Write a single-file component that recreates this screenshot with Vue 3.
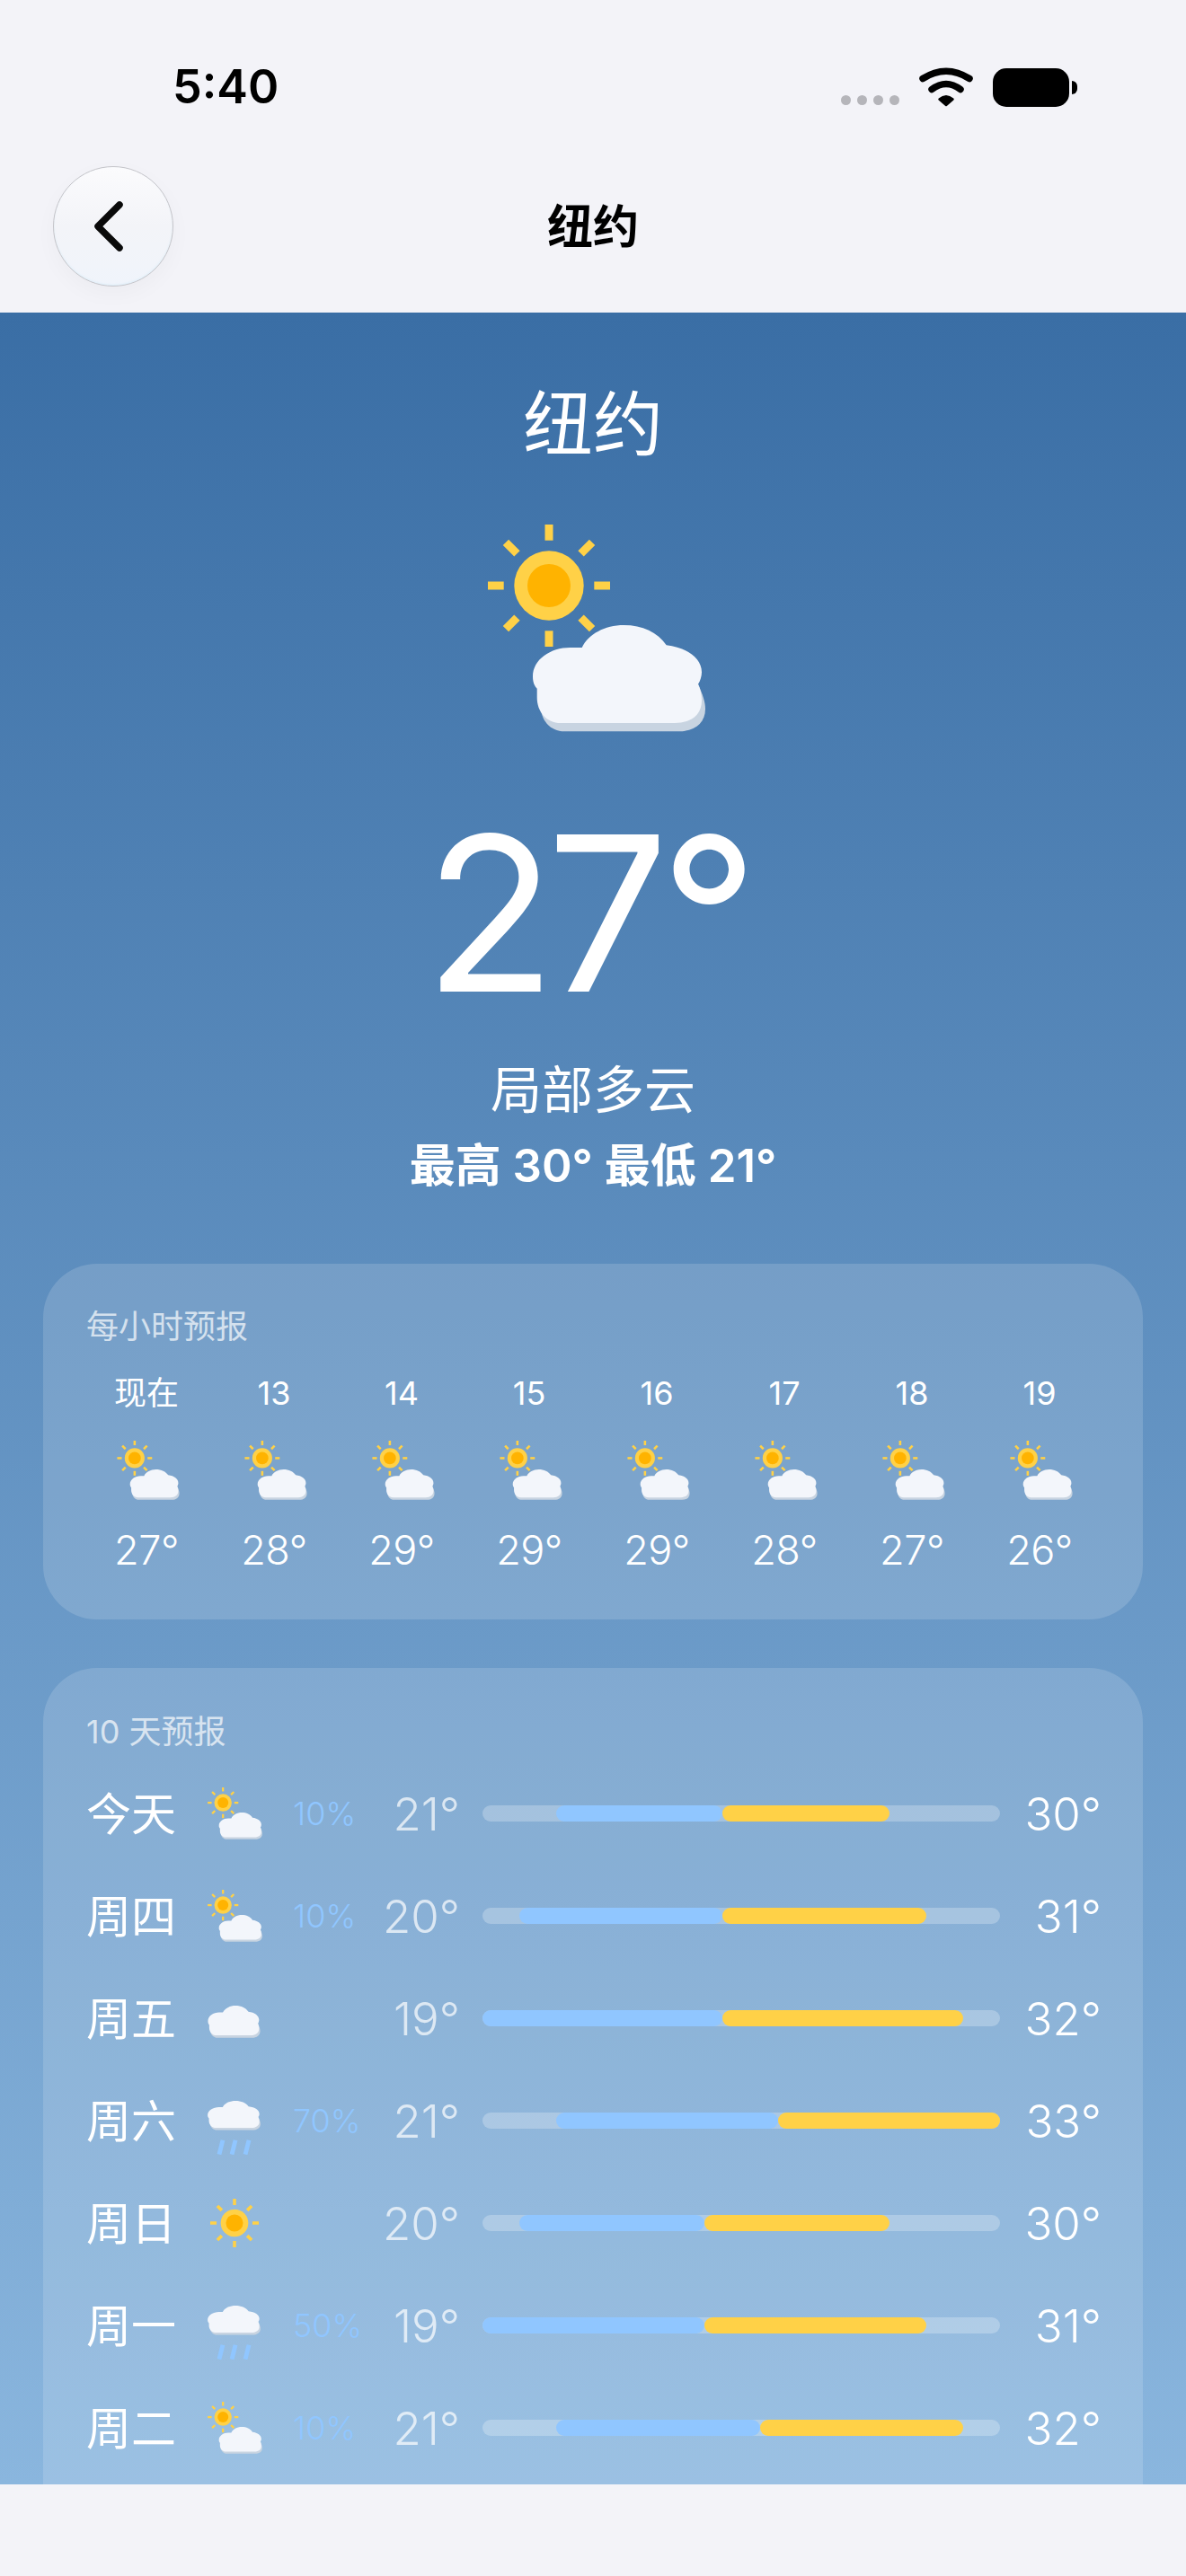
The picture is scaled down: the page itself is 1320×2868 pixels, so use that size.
<template>
  <div class="screen">
    <svg class="defs" width="0" height="0">
      <defs>
        <path id="cloud-shape" d="M104.7 137C112 122 130 112 151.3 112C172 112 189 120 198.7 134.3C222 137 238 149 238 164.3C238 169 236.5 174 234 177.7C236.5 183 238 189 238 196C238 212 226 221 208 221L81.3 221C65 221 54.7 208 54.7 192.7L54.7 182.7C51 179 50 174 50 169.3C50 150 70 137 91.3 137C96 137 100 137 104.7 137Z" />
        <path id="cloud-base" d="M60 168.4L230 168.4C235 180 238 188 238 196C238 212 226 221 208 221L81.3 221C65 221 54.7 208 54.7 192.7L54.7 180Z" />
        <g id="sun-shape">
          <g fill="#ffd147">
            <rect v-for="deg in rays" :key="deg" x="63.5" y="0" width="9" height="17.7" :transform="`rotate(${deg} 68 68)`" />
          </g>
          <circle cx="68" cy="68" r="38.7" fill="#ffd147" />
          <circle cx="68" cy="68" r="24" fill="#ffb300" />
        </g>
        <g id="cloud-full">
          <use href="#cloud-base" fill="#c8d4e1" transform="translate(4 9.3)" />
          <use href="#cloud-shape" fill="#f3f6fb" />
        </g>
        <symbol id="partly" viewBox="0 0 242 231">
          <use href="#sun-shape" />
          <use href="#cloud-full" />
        </symbol>
        <symbol id="cloudy" viewBox="50 112 192 119">
          <use href="#cloud-full" />
        </symbol>
        <symbol id="sunny" viewBox="0 0 136 136">
          <use href="#sun-shape" />
        </symbol>
        <symbol id="rain" viewBox="50 112 192 196">
          <use href="#cloud-full" transform="translate(0 11.2) scale(1 0.9)" />
          <path d="M105 255L92 307M151 255L138 307M200 255L187 307" stroke="#90c6ff" stroke-width="16" fill="none" />
        </symbol>
      </defs>
    </svg>

    <header class="top">
      <div class="status">
        <span class="time">5:40</span>
        <div class="status-right">
          <div class="signal"><i v-for="n in 4" :key="n"></i></div>
          <svg class="wifi" width="62" height="44" viewBox="0 0 62 44">
            <path d="M5 12.5Q31 -4 57 12.5" fill="none" stroke="#000" stroke-width="7.5" stroke-linecap="round" />
            <path d="M15 24.5Q31 12.5 47 24.5" fill="none" stroke="#000" stroke-width="7.5" stroke-linecap="round" />
            <path d="M31 42L23.5 35.5Q31 29 38.5 35.5Z" fill="#000" stroke="#000" stroke-width="2.5" stroke-linejoin="round" />
          </svg>
          <div class="battery"><span class="nub"></span></div>
        </div>
      </div>
      <nav class="nav">
        <button class="back">
          <svg width="42" height="62" viewBox="0 0 42 62">
            <path d="M32 7L8 31L32 55" fill="none" stroke="#0a0a0a" stroke-width="7.5" stroke-linecap="round" stroke-linejoin="round" />
          </svg>
        </button>
        <span class="nav-title">纽约</span>
      </nav>
    </header>

    <main class="weather">
      <section class="hero">
        <h1 class="city">纽约</h1>
        <svg class="hero-icon"><use href="#partly" /></svg>
        <div class="temp">27°</div>
        <div class="desc">局部多云</div>
        <div class="range">最高 30° 最低 21°</div>
      </section>

      <section class="card hourly">
        <div class="card-title">每小时预报</div>
        <div class="hours">
          <div v-for="h in hours" :key="h.label" class="hour">
            <span class="hour-label">{{ h.label }}</span>
            <svg class="hour-icon"><use href="#partly" /></svg>
            <span class="hour-temp">{{ h.temp }}°</span>
          </div>
        </div>
      </section>

      <section class="card daily">
        <div class="card-title">10 天预报</div>
        <div v-for="d in days" :key="d.name" class="day">
          <span class="day-name">{{ d.name }}</span>
          <span class="day-icon-wrap">
            <svg class="day-icon" :class="d.icon"><use :href="`#${d.icon}`" /></svg>
          </span>
          <span class="day-pct">{{ d.pct }}</span>
          <span class="day-low">{{ d.low }}°</span>
          <div class="bar">
            <span class="bar-cold" :style="{ left: pos(d.low) + '%', width: pos(mid(d)) - pos(d.low) + '%' }"></span>
            <span class="bar-warm" :style="{ left: pos(mid(d)) + '%', width: pos(d.high) - pos(mid(d)) + '%' }"></span>
          </div>
          <span class="day-high">{{ d.high }}°</span>
        </div>
      </section>
    </main>

    <div class="bottom"></div>
  </div>
</template>

<script setup>
const rays = [0, 45, 90, 135, 180, 225, 270, 315]

const hours = [
  { label: "现在", temp: 27 },
  { label: "13", temp: 28 },
  { label: "14", temp: 29 },
  { label: "15", temp: 29 },
  { label: "16", temp: 29 },
  { label: "17", temp: 28 },
  { label: "18", temp: 27 },
  { label: "19", temp: 26 }
]

const days = [
  { name: "今天", icon: "partly", pct: "10%", low: 21, high: 30 },
  { name: "周四", icon: "partly", pct: "10%", low: 20, high: 31 },
  { name: "周五", icon: "cloudy", pct: "", low: 19, high: 32 },
  { name: "周六", icon: "rain", pct: "70%", low: 21, high: 33 },
  { name: "周日", icon: "sunny", pct: "", low: 20, high: 30 },
  { name: "周一", icon: "rain", pct: "50%", low: 19, high: 31 },
  { name: "周二", icon: "partly", pct: "10%", low: 21, high: 32 }
]

// bar scale runs from the week's lowest to highest temperature
const pos = (t) => ((t - 19) / 14) * 100
const mid = (d) => (d.low + d.high) / 2
</script>

<style>
body {
  margin: 0;
  background: #f2f2f7;
}
</style>

<style scoped>
.screen {
  width: 1320px;
  height: 2868px;
  display: flex;
  flex-direction: column;
  overflow: hidden;
  background: #f3f3f8;
  font-family: Inter, "Noto Sans CJK SC", sans-serif;
  color: #fff;
}

.defs {
  position: absolute;
}

.top {
  height: 348px;
  flex: none;
  color: #000;
}

.status {
  height: 185px;
  box-sizing: border-box;
  padding: 60px 130px 0 192px;
  display: flex;
  justify-content: space-between;
  align-items: flex-start;
}

.time {
  font-size: 52px;
  line-height: 74px;
  font-weight: 600;
}

.status-right {
  display: flex;
  align-items: flex-end;
  margin-top: 14px;
  height: 45px;
}

.signal {
  display: flex;
  gap: 7px;
  margin-right: 21px;
  margin-bottom: 2px;
}

.signal i {
  width: 11px;
  height: 11px;
  border-radius: 50%;
  background: #b5b5ba;
}

.wifi {
  margin-right: 21px;
}

.battery {
  position: relative;
  width: 85px;
  height: 43px;
  border-radius: 15px;
  background: #000;
}

.nub {
  position: absolute;
  left: 88px;
  top: 14px;
  width: 6px;
  height: 15px;
  border-radius: 0 8px 8px 0;
  background: #000;
}

.nav {
  display: grid;
  grid-template-columns: 1fr auto 1fr;
  align-items: center;
  padding: 0 59px;
}

.back {
  width: 134px;
  height: 134px;
  padding: 0 8px 0 0;
  border-radius: 50%;
  border: 1.5px solid #c4c4c9;
  background: linear-gradient(180deg, #fbfbfd 0%, #f3f4f8 50%, #f0f4fb 100%);
  box-shadow: 0 8px 24px rgba(0, 0, 0, 0.03), inset 0 -1px 2px rgba(190, 228, 245, 0.35);
  display: flex;
  align-items: center;
  justify-content: center;
}

.nav-title {
  font-size: 51px;
  font-weight: 600;
  line-height: 68px;
  padding-top: 2px;
}

.weather {
  height: 2418px;
  flex: none;
  overflow: hidden;
  box-sizing: border-box;
  padding: 78px 48px 0;
  background: linear-gradient(180deg, #3a6ea5 0%, #8ab6de 100%);
}

.hero {
  display: flex;
  flex-direction: column;
  align-items: center;
}

.city {
  margin: 0;
  font-size: 78px;
  line-height: 94px;
  font-weight: 400;
}

.hero-icon {
  width: 242px;
  height: 231px;
  margin-top: 64px;
  margin-left: 8px;
}

.temp {
  font-size: 240px;
  line-height: 290px;
  font-weight: 400;
  letter-spacing: -10px;
  margin-top: 57px;
  margin-left: -14px;
}

.desc {
  font-size: 57px;
  line-height: 80px;
  margin-top: 12px;
}

.range {
  font-size: 51px;
  line-height: 68px;
  font-weight: 600;
  margin-top: 10px;
}

.card {
  background: rgba(255, 255, 255, 0.15);
  border-radius: 60px;
  padding: 48px 48px 0;
}

.hourly {
  height: 396px;
  box-sizing: border-box;
  margin-top: 75px;
}

.card-title {
  font-size: 36px;
  line-height: 46px;
  color: rgba(255, 255, 255, 0.7);
}

.hourly .card-title {
  margin-top: -1px;
}

.hours {
  display: grid;
  grid-template-columns: repeat(8, 142px);
  margin-left: -4px;
  margin-top: 29px;
}

.hour {
  display: flex;
  flex-direction: column;
  align-items: center;
}

.hour-label {
  font-size: 36px;
  line-height: 44px;
}

.hour-icon {
  width: 70px;
  height: 66px;
  margin-top: 31px;
  margin-left: 3px;
}

.hour-temp {
  font-size: 45px;
  line-height: 56px;
  font-weight: 350;
  letter-spacing: -0.5px;
  margin-top: 28px;
}

.daily {
  margin-top: 54px;
  height: 1100px;
  box-sizing: border-box;
}

.daily .card-title {
  margin-bottom: 11px;
}

.day {
  height: 114px;
  display: grid;
  grid-template-columns: 135px 95px 90px 93px 604px 111px;
  align-items: center;
}

.day-name {
  font-size: 50px;
  margin-top: -7px;
}

.day-icon-wrap {
  display: flex;
  align-items: center;
}

.day-icon {
  display: block;
}

.day-icon.partly {
  width: 61px;
  height: 58px;
}

.day-icon.cloudy {
  width: 59px;
  height: 36px;
  margin-top: 8px;
}

.day-icon.sunny {
  width: 54px;
  height: 54px;
  margin-left: 3px;
}

.day-icon.rain {
  width: 59px;
  height: 60px;
  margin-top: 16px;
}

.day-pct {
  font-size: 36px;
  font-weight: 350;
  color: #90c6ff;
}

.day-low {
  font-size: 51px;
  font-weight: 350;
  text-align: right;
  color: rgba(255, 255, 255, 0.7);
  margin-right: -3px;
}

.bar {
  position: relative;
  height: 18px;
  margin-left: 28px;
  border-radius: 9px;
  background: rgba(255, 255, 255, 0.25);
}

.bar-cold,
.bar-warm {
  position: absolute;
  top: 0;
  bottom: 0;
  border-radius: 9px;
}

.bar-cold {
  background: #90c6ff;
}

.bar-warm {
  background: #ffd147;
}

.day-high {
  font-size: 51px;
  font-weight: 350;
  text-align: right;
  margin-right: -2px;
}

.bottom {
  flex: 1;
}
</style>
